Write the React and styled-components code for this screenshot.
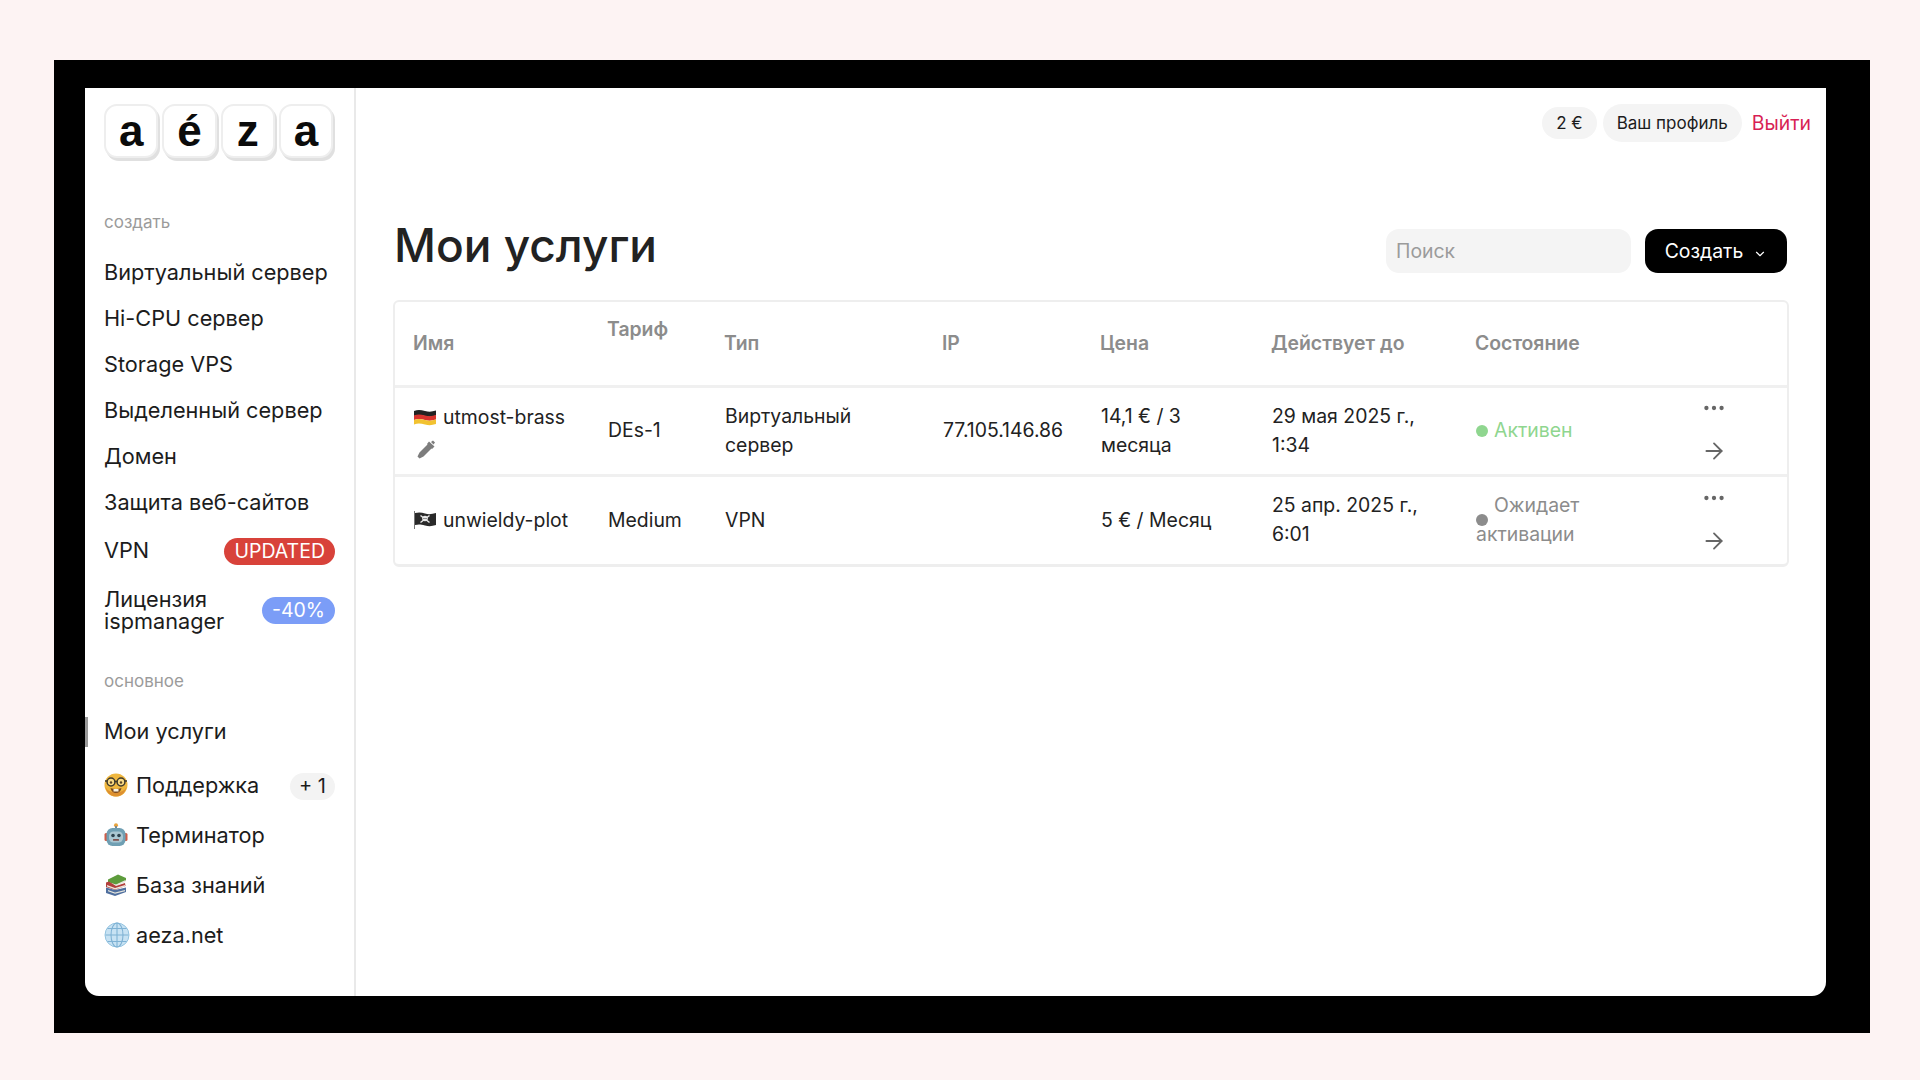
import React from "react"
import styled, { createGlobalStyle } from "styled-components"
import { ArrowRight, ChevronDown, Ellipsis } from "lucide-react"

const GlobalStyle = createGlobalStyle`
  html, body {
    margin: 0;
    background: #fdf3f3;
    font-family: Inter, "Liberation Sans", sans-serif;
    color: #1c1c1c;
  }
  * { box-sizing: border-box; }
`

const Frame = styled("div")`
  width: 1816px;
  height: 973px;
  margin: 60px 0 0 54px;
  padding: 28px 44px 37px 31px;
  background: #000;
`
const Panel = styled("div")`
  display: flex;
  height: 100%;
  background: #fff;
  border-radius: 0 0 14px 14px;
  overflow: hidden;
`
const Sidebar = styled("aside")`
  flex: 0 0 271px;
  padding: 16px 19px 0 19px;
  border-right: 2px solid #e9e9e9;
`
const Logo = styled("div")`
  display: flex;
  width: 229px;
  gap: 4px;
  margin-bottom: 54px;
`
const Key = styled("span")`
  flex: 1;
  height: 54px;
  display: flex;
  align-items: center;
  justify-content: center;
  border-radius: 13px;
  background: #fff;
  border: 2px solid #eeeeee;
  box-shadow: 2px 3px 0 #e0e0e0;
  font-size: 44px;
  font-weight: 700;
  color: #0b0b0b;
  line-height: 1;
  font-family: "Liberation Sans", Inter, sans-serif;
`
const SectionLabel = styled("div")`
  height: 20px;
  line-height: 20px;
  margin: ${(p) => p.$top || 0}px 0 17px;
  font-size: 17px;
  color: #9b9b9b;
`
const Menu = styled("nav")`
  display: flex;
  flex-direction: column;
  gap: ${(p) => p.$gap || 0}px;
`
const Item = styled("a")`
  position: relative;
  min-height: 46px;
  display: flex;
  align-items: center;
  justify-content: space-between;
  margin-top: ${(p) => p.$top || 0}px;
  font-size: 21.7px;
  line-height: 22px;
  color: #1c1c1c;
  ${(p) => p.$active && `
    &::before {
      content: "";
      position: absolute;
      left: -19px;
      top: 9px;
      width: 3px;
      height: 30px;
      background: #9a9a9a;
    }
  `}
`
const ItemLabel = styled("span")`
  display: flex;
  align-items: center;
  gap: ${(p) => p.$gap || 8}px;
`
const Badge = styled("span")`
  height: 27px;
  margin-top: ${(p) => p.$shift ?? 2}px;
  padding: 0 ${(p) => p.$pad || 10}px;
  display: flex;
  align-items: center;
  border-radius: 14px;
  font-size: ${(p) => p.$size || 19.5}px;
  background: ${(p) => p.$bg};
  color: ${(p) => p.$color || "#fff"};
`
const Main = styled("main")`
  flex: 1;
  padding: 16px 15px 0 37px;
`
const TopBar = styled("div")`
  height: 38px;
  display: flex;
  align-items: center;
  justify-content: flex-end;
  gap: 6px;
  font-size: 17px;
`
const Pill = styled("span")`
  height: ${(p) => p.$h}px;
  padding: 0 14px;
  display: flex;
  align-items: center;
  border-radius: 20px;
  background: #f4f4f4;
`
const Logout = styled("a")`
  margin-left: 4px;
  font-size: 19.4px;
  color: #d81f55;
`
const TitleRow = styled("div")`
  display: flex;
  justify-content: space-between;
  margin: 74px 24px 26px 1px;
`
const Title = styled("h1")`
  margin: 0;
  font-size: 46px;
  line-height: 58px;
  font-weight: 500;
  color: #222;
`
const Controls = styled("div")`
  display: flex;
  gap: 14px;
  margin-top: 13px;
`
const Search = styled("input")`
  width: 245px;
  height: 44px;
  padding: 0 10px;
  border: 0;
  border-radius: 13px;
  background: #f4f4f4;
  font: 19.4px Inter, sans-serif;
  &::placeholder { color: #9b9b9b; }
`
const CreateButton = styled("button")`
  width: 142px;
  height: 44px;
  display: flex;
  align-items: center;
  justify-content: center;
  gap: 10px;
  border: 0;
  border-radius: 13px;
  background: #000;
  color: #fff;
  font: 19.4px Inter, sans-serif;
  svg { margin-top: 5px; }
`
const TableBox = styled("div")`
  width: 1396px;
  border: 2px solid #eeeeee;
  border-bottom-width: 3px;
  border-radius: 6px;
`
const Table = styled("table")`
  width: 100%;
  border-collapse: collapse;
  table-layout: fixed;
`
const Col = styled("col")`
  width: ${(p) => p.$w}px;
`
const Th = styled("th")`
  height: 84px;
  padding: 0 0 ${(p) => p.$raise || 0}px 18px;
  text-align: left;
  font-size: 19.4px;
  font-weight: 600;
  color: #8c8c8c;
  border-bottom: 3px solid #f0f0f0;
`
const Row = styled("tr")`
  &:not(:last-child) td { border-bottom: 3px solid #f0f0f0; }
`
const Td = styled("td")`
  height: 89px;
  padding: 0 14px 0 19px;
  font-size: 19.4px;
  line-height: 29px;
  color: #222;
`
const Name = styled("div")`
  display: flex;
  align-items: center;
  gap: 7px;
`
const PenWrap = styled("div")`
  height: 20px;
  margin: 7px 0 0 2px;
`
const Status = styled("div")`
  position: relative;
  text-indent: 18px;
  color: ${(p) => p.$color};
`
const Dot = styled("i")`
  position: absolute;
  left: 0;
  top: 50%;
  width: 12px;
  height: 12px;
  margin-top: -6px;
  border-radius: 50%;
  background: ${(p) => p.$color};
`
const Actions = styled("div")`
  display: flex;
  flex-direction: column;
  align-items: flex-start;
  gap: 17px;
  color: #666;
  margin: -2px 0 0 2px;
`

const Nerd = () => (
  <svg width="24" height="24" viewBox="0 0 24 24">
    <circle cx="12" cy="12" r="11.5" fill="#efb73f" />
    <path d="M1.500 14c1 5.500 5 9.500 10.500 9.500s9.500-4 10.500-9.500c-2 4-5 5-10.500 5s-8.500-1-10.500-5z" fill="#dd9030" />
    <circle cx="7" cy="9" r="3.900" fill="#f8d983" stroke="#3f3a2c" strokeWidth="1.500" />
    <circle cx="17" cy="9" r="3.900" fill="#f8d983" stroke="#3f3a2c" strokeWidth="1.500" />
    <path d="M1 8h2M21 8h2M10.500 8.500h3" stroke="#3f3a2c" strokeWidth="1.400" />
    <circle cx="7" cy="9.500" r="1.200" fill="#5a4426" />
    <circle cx="17" cy="9.500" r="1.200" fill="#5a4426" />
    <path d="M6.500 15c3.500 1.300 7.500 1.300 11 0-.6 3.500-3 5-5.500 5s-4.900-1.500-5.500-5z" fill="#7b4a20" />
    <path d="M9.500 16h5v2.500h-5z" fill="#f7f3e6" />
  </svg>
)
const Robot = () => (
  <svg width="24" height="24" viewBox="0 0 24 24">
    <circle cx="12" cy="2.200" r="2" fill="#e8a33d" />
    <rect x="11" y="3" width="2" height="3" fill="#7b8a92" />
    <rect x="0.500" y="10" width="3.500" height="8" rx="1.500" fill="#cf5d48" />
    <rect x="20" y="10" width="3.500" height="8" rx="1.500" fill="#cf5d48" />
    <rect x="2.500" y="5" width="19" height="18" rx="6" fill="#6f9fb3" />
    <rect x="5" y="8.500" width="14" height="11" rx="4.500" fill="#aac6d1" />
    <circle cx="9" cy="12.500" r="1.800" fill="#2f4450" />
    <circle cx="15" cy="12.500" r="1.800" fill="#2f4450" />
    <rect x="9" y="16" width="6" height="1.800" rx="0.600" fill="#7f4f4c" />
  </svg>
)
const Books = () => (
  <svg width="24" height="24" viewBox="0 0 24 24">
    <path d="M4 6.500 L14 1.500 L22 5 L22 7.500 L12 12 L4 9.500z" fill="#5d9c3c" />
    <path d="M4 9 L12 11.500 L21.500 7 L21.500 9 L12 13 L4 11z" fill="#e6e6dc" />
    <path d="M2 9.500 L5 8.500 L12 13 L21 10 L21.500 13 L11 17 L2 14z" fill="#b23f3c" />
    <path d="M3 12 L11 15 L21 12 L21 13.500 L11 16.500 L3 13.500z" fill="#ece6dc" />
    <path d="M2 14.500 L11 17 L22 14.500 L22 19 L11 23 L2 20z" fill="#4f6f9f" />
    <path d="M4 17 L11 19.500 L21 17 L21 18.200 L11 20.800 L4 18.300z" fill="#e4e4dc" />
  </svg>
)
const Globe = () => (
  <svg width="26" height="26" viewBox="0 0 26 26" fill="none">
    <circle cx="13" cy="13" r="12" fill="#c7e2f3" stroke="#93c3e0" />
    <g stroke="#7fb2d4" strokeWidth="1.100">
      <ellipse cx="13" cy="13" rx="6" ry="12" />
      <path d="M13 1v24M1.500 13h23M3.500 6.500h19M3.500 19.500h19" />
    </g>
  </svg>
)
const GermanFlag = () => (
  <svg width="22" height="17" viewBox="0 0 22 17">
    <path d="M0 2c4-1.500 7-1 11 0s7 .8 11-.500v5c-4 1.300-7 1.500-11 .500s-7-1.500-11 0z" fill="#222" />
    <path d="M0 6.500c4-1.500 7-1 11 0s7 .8 11-.500v4.500c-4 1.300-7 1.500-11 .500s-7-1.500-11 0z" fill="#d8322c" />
    <path d="M0 11c4-1.500 7-1 11 0s7 .8 11-.500v4.500c-4 1.300-7 1.500-11 .500s-7-1.500-11 0z" fill="#f2c230" />
  </svg>
)
const PirateFlag = () => (
  <svg width="22" height="18" viewBox="0 0 22 18">
    <rect x="0" y="0" width="1" height="18" fill="#777" />
    <path d="M1 2c4-1 7-.5 10 .500s7 .8 11-.500v12c-4 1.300-7 1.500-11 .500s-6-1.500-10-.500z" fill="#2a2a2a" />
    <path d="M6.500 4.500l9 7M15.500 4.500l-9 7" stroke="#e8e8e8" strokeWidth="1.500" />
    <circle cx="11" cy="7.500" r="2.800" fill="#e8e8e8" />
    <circle cx="10" cy="7.500" r="0.600" fill="#2a2a2a" />
    <circle cx="12" cy="7.500" r="0.600" fill="#2a2a2a" />
  </svg>
)
const Pen = () => (
  <svg width="20" height="20" viewBox="0 0 20 20" fill="#7d7d7d">
    <path d="M13 1.500 L18.500 6.500 L16 9 L15.500 8.500 L7.500 16.500 L3.500 18.500 L1.500 16.500 L3.500 12.500 L11.500 4.500 L11 4z" />
    <path d="M15 2 L17 0.500 L19 2.500 L17.500 4.500z" />
  </svg>
)

const columns = [194, 117, 218, 158, 171, 204, 223, 107]

const RowActions = () => (
  <Actions>
    <Ellipsis size={26} />
    <ArrowRight size={26} strokeWidth={1.7} />
  </Actions>
)

const App = () => {
  return (
    <Frame>
      <GlobalStyle />
      <Panel>
        <Sidebar>
          <Logo>
            <Key>a</Key>
            <Key>é</Key>
            <Key>z</Key>
            <Key>a</Key>
          </Logo>
          <SectionLabel>создать</SectionLabel>
          <Menu>
            <Item>Виртуальный сервер</Item>
            <Item>Hi-CPU сервер</Item>
            <Item>Storage VPS</Item>
            <Item>Выделенный сервер</Item>
            <Item>Домен</Item>
            <Item>Защита веб-сайтов</Item>
            <Item $top={2}>
              VPN
              <Badge $bg="#d8423a">UPDATED</Badge>
            </Item>
            <Item $top={14}>
              <span>Лицензия<br />ispmanager</span>
              <Badge $bg="#7b9df7" $shift={0}>-40%</Badge>
            </Item>
          </Menu>
          <SectionLabel $top={38}>основное</SectionLabel>
          <Menu $gap={4}>
            <Item $active>Мои услуги</Item>
            <Item $top={4}>
              <ItemLabel><Nerd />Поддержка</ItemLabel>
              <Badge $bg="#f3f3f3" $color="#1c1c1c" $size={20} $pad={9}>+ 1</Badge>
            </Item>
            <Item><ItemLabel><Robot />Терминатор</ItemLabel></Item>
            <Item><ItemLabel><Books />База знаний</ItemLabel></Item>
            <Item><ItemLabel $gap={6}><Globe />aeza.net</ItemLabel></Item>
          </Menu>
        </Sidebar>
        <Main>
          <TopBar>
            <Pill $h={32}>2 €</Pill>
            <Pill $h={38}>Ваш профиль</Pill>
            <Logout>Выйти</Logout>
          </TopBar>
          <TitleRow>
            <Title>Мои услуги</Title>
            <Controls>
              <Search placeholder="Поиск" />
              <CreateButton>
                Создать
                <ChevronDown size={14} />
              </CreateButton>
            </Controls>
          </TitleRow>
          <TableBox>
            <Table>
              <colgroup>
                {columns.map((w, i) => (
                  <Col key={i} $w={w} />
                ))}
              </colgroup>
              <thead>
                <tr>
                  <Th>Имя</Th>
                  <Th $raise={28}>Тариф</Th>
                  <Th>Тип</Th>
                  <Th>IP</Th>
                  <Th>Цена</Th>
                  <Th>Действует до</Th>
                  <Th>Состояние</Th>
                  <Th />
                </tr>
              </thead>
              <tbody>
                <Row>
                  <Td>
                    <Name><GermanFlag />utmost-brass</Name>
                    <PenWrap><Pen /></PenWrap>
                  </Td>
                  <Td>DEs-1</Td>
                  <Td>Виртуальный сервер</Td>
                  <Td>77.105.146.86</Td>
                  <Td>14,1 € / 3 месяца</Td>
                  <Td>29 мая 2025 г., 1:34</Td>
                  <Td>
                    <Status $color="#8fd68f"><Dot $color="#8fd68f" />Активен</Status>
                  </Td>
                  <Td><RowActions /></Td>
                </Row>
                <Row>
                  <Td><Name><PirateFlag />unwieldy-plot</Name></Td>
                  <Td>Medium</Td>
                  <Td>VPN</Td>
                  <Td />
                  <Td>5 € / Месяц</Td>
                  <Td>25 апр. 2025 г., 6:01</Td>
                  <Td>
                    <Status $color="#8c8c8c"><Dot $color="#8c8c8c" />Ожидает активации</Status>
                  </Td>
                  <Td><RowActions /></Td>
                </Row>
              </tbody>
            </Table>
          </TableBox>
        </Main>
      </Panel>
    </Frame>
  )
}

export default App
